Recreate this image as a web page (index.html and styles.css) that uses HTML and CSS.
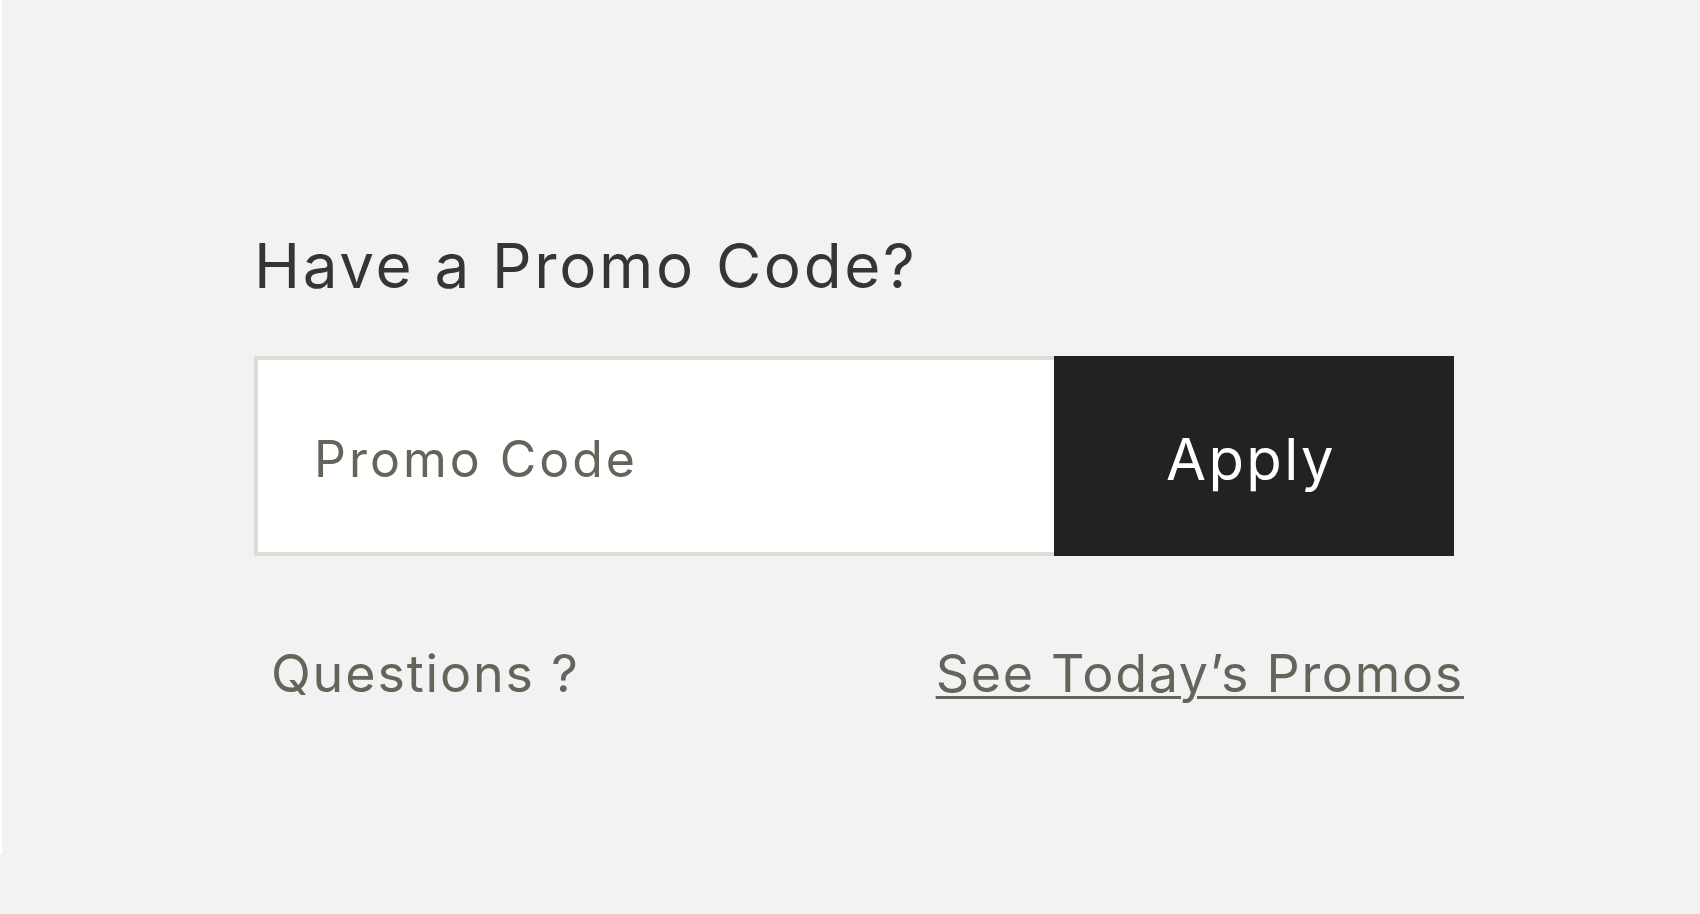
FILE: index.html
```
<!DOCTYPE html>
<html lang="en">
<head>
<meta charset="utf-8">
<title>Promo Code</title>
<link rel="stylesheet" href="styles.css">
</head>
<body>
<div class="page">
  <section class="promo">
    <h2 class="promo-title">Have a Promo Code?</h2>
    <form class="promo-form" onsubmit="return false">
      <input class="promo-input" type="text" placeholder="Promo Code">
      <button class="promo-apply" type="submit">Apply</button>
    </form>
    <div class="promo-footer">
      <span class="promo-questions">Questions ?</span>
      <a class="promo-link" href="#">See Today’s Promos</a>
    </div>
  </section>
</div>
</body>
</html>
```
FILE: styles.css
```
html, body {
  margin: 0;
  padding: 0;
  background: #f2f2f2;
}

body {
  font-family: Inter, "Liberation Sans", sans-serif;
}

.page {
  box-sizing: border-box;
  height: 854px;
  border-left: 2px solid #ffffff;
  padding: 228px 0 0 252px;
}

.promo {
  width: 1210px;
}

.promo-title {
  margin: 0;
  font-size: 62px;
  line-height: 76px;
  font-weight: 400;
  letter-spacing: 2.65px;
  color: #353535;
}

.promo-form {
  display: flex;
  margin: 52px 0 0 0;
}

.promo-input {
  box-sizing: border-box;
  width: 800px;
  height: 200px;
  margin: 0;
  border: 4px solid #dcdcd3;
  border-right: 0;
  border-radius: 0;
  background: #ffffff;
  padding: 6px 0 0 56px;
  font-family: Inter, "Liberation Sans", sans-serif;
  font-size: 50px;
  letter-spacing: 3px;
  color: #333;
  outline: none;
}

.promo-input::placeholder {
  color: #66635b;
  opacity: 1;
}

.promo-apply {
  box-sizing: border-box;
  width: 400px;
  height: 200px;
  margin: 0;
  border: 0;
  border-radius: 0;
  background: #222222;
  color: #ffffff;
  padding: 6px 6px 0 0;
  font-family: Inter, "Liberation Sans", sans-serif;
  font-size: 58px;
  letter-spacing: 2.4px;
  display: flex;
  align-items: center;
  justify-content: center;
}

.promo-footer {
  display: flex;
  justify-content: space-between;
  align-items: baseline;
  margin-top: 86px;
  padding-left: 17px;
}

.promo-questions,
.promo-link {
  font-size: 52px;
  line-height: 64px;
  color: #66635b;
}

.promo-questions {
  letter-spacing: 1.85px;
}

.promo-link {
  letter-spacing: 1.7px;
  text-decoration: underline;
  text-decoration-thickness: 3px;
  text-underline-offset: 4px;
}
```
